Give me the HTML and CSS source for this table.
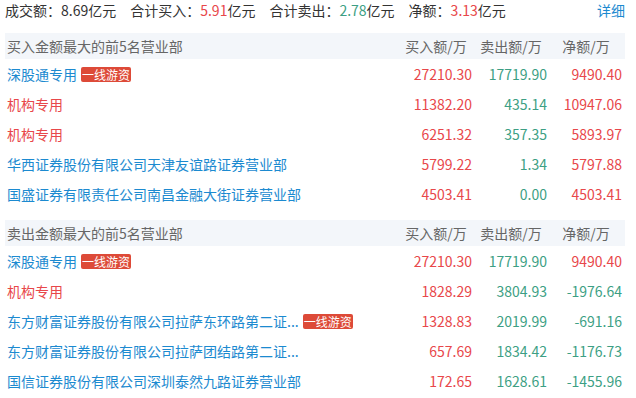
FILE: index.html
```html
<!DOCTYPE html>
<html lang="zh">
<head>
<meta charset="utf-8">
<link rel="stylesheet" href="styles.css">
</head>
<body>
<div class="wrap">
  <div class="summary">
    <span class="item">成交额：8.69亿元</span>
    <span class="item">合计买入：<span class="red">5.91</span>亿元</span>
    <span class="item">合计卖出：<span class="green">2.78</span>亿元</span>
    <span class="item">净额：<span class="red">3.13</span>亿元</span>
    <a class="more">详细</a>
  </div>

  <div class="table">
    <div class="row head">
      <div class="name">买入金额最大的前5名营业部</div>
      <div class="ch">买入额/万</div>
      <div class="ch">卖出额/万</div>
      <div class="ch">净额/万</div>
    </div>
    <div class="row">
      <div class="name"><span class="link">深股通专用</span><span class="tag">一线游资</span></div>
      <div class="num red">27210.30</div><div class="num green">17719.90</div><div class="num red">9490.40</div>
    </div>
    <div class="row">
      <div class="name"><span class="org">机构专用</span></div>
      <div class="num red">11382.20</div><div class="num green">435.14</div><div class="num red">10947.06</div>
    </div>
    <div class="row">
      <div class="name"><span class="org">机构专用</span></div>
      <div class="num red">6251.32</div><div class="num green">357.35</div><div class="num red">5893.97</div>
    </div>
    <div class="row">
      <div class="name"><span class="link">华西证券股份有限公司天津友谊路证券营业部</span></div>
      <div class="num red">5799.22</div><div class="num green">1.34</div><div class="num red">5797.88</div>
    </div>
    <div class="row">
      <div class="name"><span class="link">国盛证券有限责任公司南昌金融大街证券营业部</span></div>
      <div class="num red">4503.41</div><div class="num green">0.00</div><div class="num red">4503.41</div>
    </div>
  </div>

  <div class="table second">
    <div class="row head">
      <div class="name">卖出金额最大的前5名营业部</div>
      <div class="ch">买入额/万</div>
      <div class="ch">卖出额/万</div>
      <div class="ch">净额/万</div>
    </div>
    <div class="row">
      <div class="name"><span class="link">深股通专用</span><span class="tag">一线游资</span></div>
      <div class="num red">27210.30</div><div class="num green">17719.90</div><div class="num red">9490.40</div>
    </div>
    <div class="row">
      <div class="name"><span class="org">机构专用</span></div>
      <div class="num red">1828.29</div><div class="num green">3804.93</div><div class="num green">-1976.64</div>
    </div>
    <div class="row">
      <div class="name"><span class="link">东方财富证券股份有限公司拉萨东环路第二证...</span><span class="tag">一线游资</span></div>
      <div class="num red">1328.83</div><div class="num green">2019.99</div><div class="num green">-691.16</div>
    </div>
    <div class="row">
      <div class="name"><span class="link">东方财富证券股份有限公司拉萨团结路第二证...</span></div>
      <div class="num red">657.69</div><div class="num green">1834.42</div><div class="num green">-1176.73</div>
    </div>
    <div class="row">
      <div class="name"><span class="link">国信证券股份有限公司深圳泰然九路证券营业部</span></div>
      <div class="num red">172.65</div><div class="num green">1628.61</div><div class="num green">-1455.96</div>
    </div>
  </div>
</div>
</body>
</html>
```

FILE: styles.css
```css
html, body {
  margin: 0;
  padding: 0;
  background: #ffffff;
}
body {
  font-family: "Noto Sans CJK SC", "Noto Sans", sans-serif;
  font-size: 14px;
  color: #333333;
}
.wrap {
  width: 620px;
  margin-left: 5px;
}
.summary {
  display: flex;
  align-items: center;
  height: 20px;
  line-height: 20px;
  margin-bottom: 13px;
  color: #333333;
}
.summary .item {
  margin-right: 14px;
}
.summary .more {
  margin-left: auto;
  color: #1c8ad0;
  cursor: pointer;
}
.red { color: #e8474a; }
.green { color: #3d9f84; }
.table.second {
  margin-top: 11px;
}
.row {
  display: grid;
  grid-template-columns: 1fr 75px 75px 75px;
  padding: 0 3px 0 2px;
  height: 30px;
  align-items: center;
  line-height: 20px;
}
.row.head {
  height: 26px;
  background: #f3f6fa;
  color: #666666;
}
.ch {
  text-align: center;
  padding-left: 3px;
  white-space: nowrap;
}
.num {
  text-align: right;
}
.name {
  display: flex;
  align-items: center;
  white-space: nowrap;
}
.link { color: #1c8ad0; }
.org { color: #e8474a; }
.tag {
  display: inline-block;
  margin-left: 4px;
  height: 15px;
  line-height: 15px;
  padding: 0 1px;
  background: #dd4a38;
  color: #ffffff;
  font-size: 12px;
  border-radius: 2px;
}
```
